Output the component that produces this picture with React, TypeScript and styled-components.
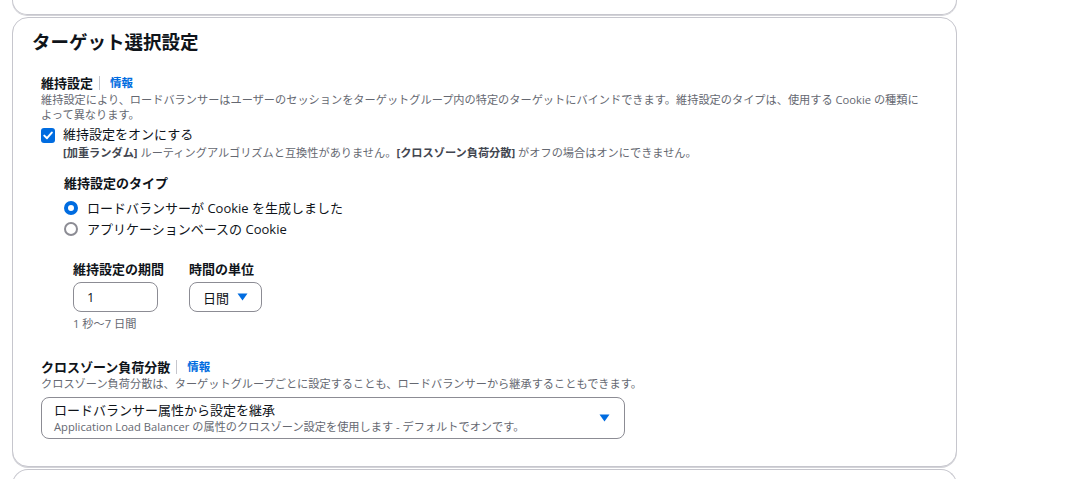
import React from "react";
import styled, { createGlobalStyle } from "styled-components";

const Global = createGlobalStyle`
  html, body { margin: 0; padding: 0; background: #ffffff; }
  body {
    font-family: "Open Sans", "Noto Sans CJK JP", sans-serif;
    color: #0f141a;
    -webkit-font-smoothing: antialiased;
  }
  * { box-sizing: border-box; }
`;

const Page = styled.div`
  display: flex;
  flex-direction: column;
  gap: 2px;
  width: 1074px;
  height: 479px;
  overflow: hidden;
  padding: 0 117px 0 12px;
`;

const CardTail = styled.div`
  height: 15px;
  flex: none;
  border: 1px solid #c6c6cd;
  border-top: none;
  border-radius: 0 0 16px 16px;
  box-shadow: 0 1px 0 0 #d4d4d9;
`;

const Card = styled.section`
  flex: none;
  border: 1px solid #c6c6cd;
  border-radius: 16px;
  box-shadow: 0 1px 0 0 #d4d4d9;
  padding: 12px 20px 27px 19px;
  background: #fff;
`;

const CardHead = styled.div`
  flex: 1;
  min-height: 30px;
  border: 1px solid #c6c6cd;
  border-bottom: none;
  border-radius: 16px 16px 0 0;
`;

const Title = styled.h2`
  margin: 0;
  font-size: 18.5px;
  line-height: 24px;
  font-weight: 700;
`;

const Body = styled.div`
  display: flex;
  flex-direction: column;
  margin: 20px 0 0 9px;
`;

const Field = styled.div<{ $indent?: number; $top?: number }>`
  display: flex;
  flex-direction: column;
  margin-left: ${(p) => p.$indent ?? 0}px;
  margin-top: ${(p) => p.$top ?? 0}px;
`;

const LabelRow = styled.div`
  display: flex;
  align-items: center;
  height: 18px;
`;

const Label = styled.span`
  font-size: 13px;
  line-height: 18px;
  font-weight: 700;
  color: #0f141a;
`;

const Divider = styled.span`
  width: 1px;
  height: 14px;
  background: #c6c6cd;
  margin: 0 10px 0 6px;
`;

const InfoLink = styled.a`
  font-size: 11.5px;
  font-weight: 700;
  color: #006ce0;
  text-decoration: none;
  line-height: 18px;
`;

const Desc = styled.div`
  font-size: 11.2px;
  line-height: 15px;
  color: #656871;
`;

const Strong = styled.b`
  font-weight: 700;
  color: #424650;
`;

const CheckRow = styled.label`
  display: flex;
  gap: 8px;
  margin-top: 3px;
`;

const CheckBox = styled.span`
  width: 14px;
  height: 15px;
  margin-top: 3px;
  border-radius: 3px;
  background: #006ce0;
  display: flex;
  align-items: center;
  justify-content: center;
  flex: none;
`;

const CheckText = styled.div`
  display: flex;
  flex-direction: column;
`;

const BodyText = styled.span`
  font-size: 13px;
  line-height: 18px;
  color: #0f141a;
`;

const HelpText = styled.div`
  font-size: 11.2px;
  line-height: 15px;
  margin-top: 2px;
  color: #656871;
`;

const RadioGroup = styled.div`
  display: flex;
  flex-direction: column;
  margin-top: 5px;
`;

const RadioRow = styled.label`
  display: flex;
  align-items: center;
  gap: 9px;
  height: 21px;
`;

const RadioDot = styled.span<{ $checked?: boolean }>`
  width: 14px;
  height: 14px;
  border-radius: 50%;
  flex: none;
  background: #fff;
  border: ${(p) => (p.$checked ? "4px solid #006ce0" : "2px solid #8c8c94")};
`;

const Columns = styled.div`
  display: grid;
  grid-template-columns: 116px auto;
  margin-left: 32px;
  margin-top: 21px;
`;

const Column = styled.div`
  display: flex;
  flex-direction: column;
`;

const InputBox = styled.div<{ $width: number }>`
  width: ${(p) => p.$width}px;
  height: 30px;
  margin-top: 4px;
  border: 1px solid #8c8c94;
  border-radius: 8px;
  display: flex;
  align-items: center;
  justify-content: space-between;
  padding: 0 13px 0 13px;
  font-size: 13px;
  color: #0f141a;
`;

const Constraint = styled.div`
  font-size: 11.2px;
  line-height: 15px;
  margin-top: 4px;
  color: #656871;
`;

const BigSelect = styled.div`
  width: 584px;
  margin-top: 6px;
  border: 1px solid #8c8c94;
  border-radius: 8px;
  display: flex;
  align-items: center;
  justify-content: space-between;
  padding: 3px 14px 4px 12px;
`;

const SelectText = styled.div`
  display: flex;
  flex-direction: column;
`;

const SubText = styled.span`
  font-size: 11.2px;
  line-height: 15px;
  color: #656871;
`;

const Caret = () => (
  <svg width="11" height="8" viewBox="0 0 11 8">
    <path d="M0.5 0.5 H10.5 L5.5 7.5 Z" fill="#006ce0" />
  </svg>
);

export default function App() {
  return (
    <>
      <Global />
      <Page>
        <CardTail />
        <Card>
          <Title>ターゲット選択設定</Title>
          <Body>
            <Field>
              <LabelRow>
                <Label>維持設定</Label>
                <Divider />
                <InfoLink>情報</InfoLink>
              </LabelRow>
              <Desc>
                維持設定により、ロードバランサーはユーザーのセッションをターゲットグループ内の特定のターゲットにバインドできます。維持設定のタイプは、使用する Cookie の種類に
                <br />
                よって異なります。
              </Desc>
              <CheckRow>
                <CheckBox>
                  <svg width="10" height="9" viewBox="0 0 10 9">
                    <path d="M1.3 4.6 L4 7.2 L8.8 1.6" stroke="#fff" strokeWidth="2" fill="none" strokeLinecap="round" strokeLinejoin="round" />
                  </svg>
                </CheckBox>
                <CheckText>
                  <BodyText>維持設定をオンにする</BodyText>
                  <HelpText>
                    <Strong>[加重ランダム]</Strong> ルーティングアルゴリズムと互換性がありません。<Strong>[クロスゾーン負荷分散]</Strong> がオフの場合はオンにできません。
                  </HelpText>
                </CheckText>
              </CheckRow>
            </Field>

            <Field $indent={23} $top={14}>
              <LabelRow>
                <Label>維持設定のタイプ</Label>
              </LabelRow>
              <RadioGroup>
                <RadioRow>
                  <RadioDot $checked />
                  <BodyText>ロードバランサーが Cookie を生成しました</BodyText>
                </RadioRow>
                <RadioRow>
                  <RadioDot />
                  <BodyText>アプリケーションベースの Cookie</BodyText>
                </RadioRow>
              </RadioGroup>
            </Field>

            <Columns>
              <Column>
                <LabelRow>
                  <Label>維持設定の期間</Label>
                </LabelRow>
                <InputBox $width={85}>
                  <span>1</span>
                </InputBox>
                <Constraint>1 秒〜7 日間</Constraint>
              </Column>
              <Column>
                <LabelRow>
                  <Label>時間の単位</Label>
                </LabelRow>
                <InputBox $width={73}>
                  <span>日間</span>
                  <Caret />
                </InputBox>
              </Column>
            </Columns>

            <Field $top={27}>
              <LabelRow>
                <Label>クロスゾーン負荷分散</Label>
                <Divider />
                <InfoLink>情報</InfoLink>
              </LabelRow>
              <Desc>
                クロスゾーン負荷分散は、ターゲットグループごとに設定することも、ロードバランサーから継承することもできます。
              </Desc>
              <BigSelect>
                <SelectText>
                  <BodyText>ロードバランサー属性から設定を継承</BodyText>
                  <SubText>
                    Application Load Balancer の属性のクロスゾーン設定を使用します - デフォルトでオンです。
                  </SubText>
                </SelectText>
                <Caret />
              </BigSelect>
            </Field>
          </Body>
        </Card>
        <CardHead />
      </Page>
    </>
  );
}
